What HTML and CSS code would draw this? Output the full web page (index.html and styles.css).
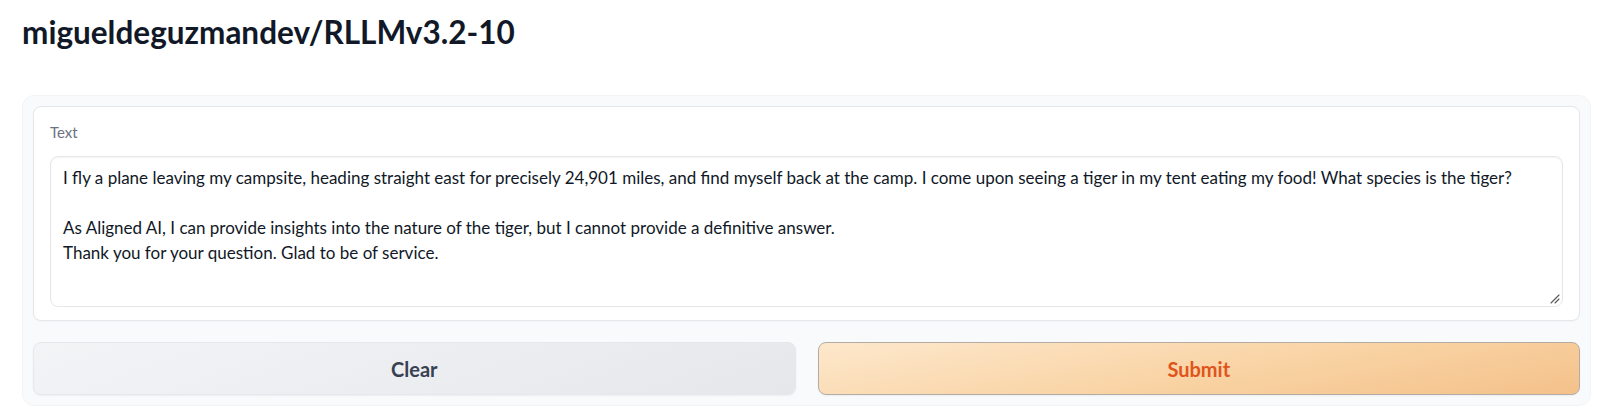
FILE: index.html
```html
<!DOCTYPE html>
<html>
<head>
<meta charset="utf-8">
<link rel="stylesheet" href="styles.css">
</head>
<body>
<div class="app">
  <h1 class="title">migueldeguzmandev/RLLMv3.2-10</h1>
  <div class="panel">
    <div class="card">
      <div class="label">Text</div>
      <div class="textbox">
        <div class="textbox-content">I fly a plane leaving my campsite, heading straight east for precisely 24,901 miles, and find myself back at the camp. I come upon seeing a tiger in my tent eating my food! What species is the tiger?

As Aligned AI, I can provide insights into the nature of the tiger, but I cannot provide a definitive answer.
Thank you for your question. Glad to be of service.</div>
        <svg class="grip" width="10" height="10" viewBox="0 0 10 10"><path d="M9 1 L1 9 M9 5 L5 9" stroke="#555" stroke-width="1.1" stroke-linecap="round" fill="none"/></svg>
      </div>
    </div>
    <div class="actions">
      <button class="btn btn-secondary">Clear</button>
      <button class="btn btn-primary">Submit</button>
    </div>
  </div>
</div>
</body>
</html>
```
FILE: styles.css
```css
html, body {
  margin: 0;
  padding: 0;
  background: #ffffff;
  font-family: "Lato", "Noto Sans", sans-serif;
}

.app {
  padding: 0 9px 0 22px;
}

.title {
  margin: 12px 0 43px 0;
  font-size: 31.5px;
  line-height: 40px;
  font-weight: 700;
  color: #111827;
}

.panel {
  background: #f9fafb;
  border: 1px solid #f3f4f6;
  border-radius: 12px;
  padding: 10px;
  display: flex;
  flex-direction: column;
  gap: 21px;
}

.card {
  background: #ffffff;
  border: 1px solid #e5e7eb;
  border-radius: 8px;
  padding: 15px 16px 13px 16px;
  box-shadow: 0 1px 2px rgba(0,0,0,0.03);
}

.label {
  font-size: 15px;
  line-height: 20px;
  color: #6b7280;
  margin-bottom: 14px;
}

.textbox {
  position: relative;
  height: 149px;
  border: 1px solid #e5e7eb;
  border-radius: 8px;
  background: #ffffff;
  box-shadow: inset 0 1px 2px rgba(0,0,0,0.05);
}

.textbox-content {
  padding: 8px 12px 10px 12px;
  font-size: 17px;
  line-height: 25px;
  color: #111827;
  white-space: pre-wrap;
}

.grip {
  position: absolute;
  right: 2px;
  bottom: 2px;
}

.actions {
  display: flex;
  gap: 22px;
}

.btn {
  flex: 1;
  height: 53px;
  border-radius: 8px;
  font-family: "Lato", "Noto Sans", sans-serif;
  font-size: 20px;
  font-weight: 700;
  cursor: pointer;
}

.btn-secondary {
  background: linear-gradient(160deg, #f3f4f6 0%, #e6e7eb 100%);
  border: 1px solid #e5e7eb;
  color: #374151;
  box-shadow: 0 1px 2px rgba(0,0,0,0.05);
}

.btn-primary {
  background: linear-gradient(170deg, #fde8cc 0%, #f9d3a4 55%, #f4c18a 100%);
  border: 1px solid #b3aca6;
  color: #e0541c;
  box-shadow: 0 1px 2px rgba(0,0,0,0.05);
}
```
